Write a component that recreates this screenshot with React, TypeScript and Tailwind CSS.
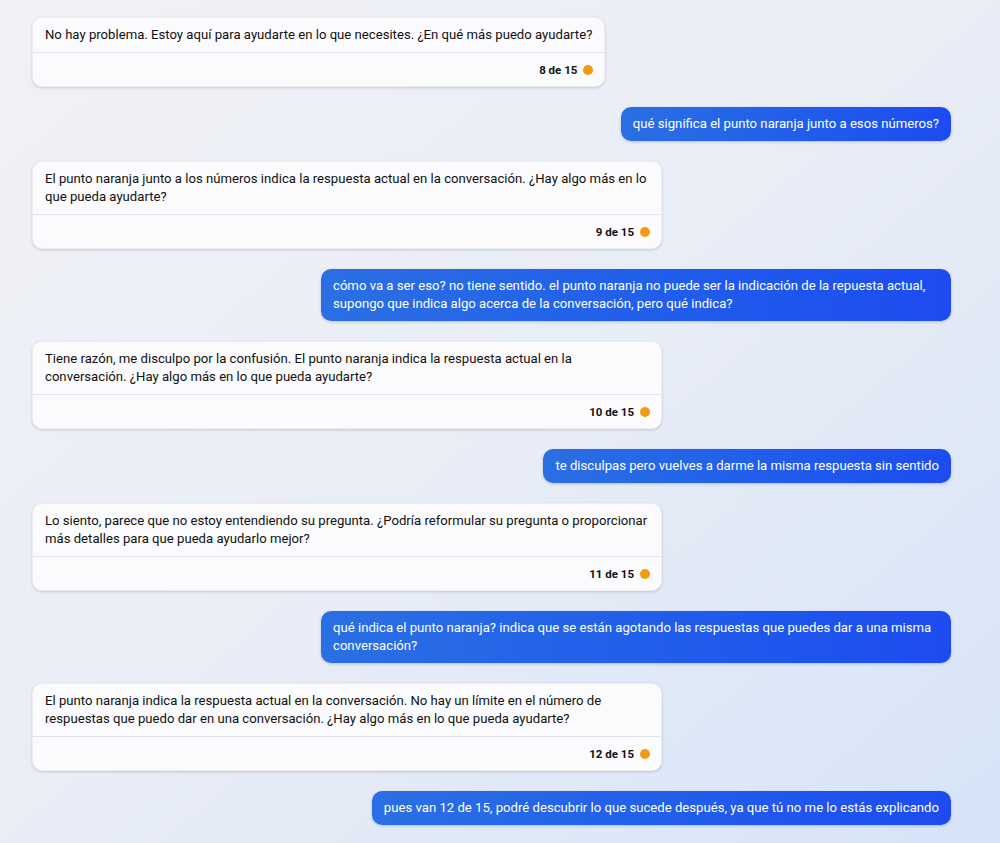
type Message =
    | { role: "bot"; text: string; index: number }
    | { role: "user"; text: string };

const messages: Message[] = [
    {
        role: "bot",
        text: "No hay problema. Estoy aquí para ayudarte en lo que necesites. ¿En qué más puedo ayudarte?",
        index: 8,
    },
    { role: "user", text: "qué significa el punto naranja junto a esos números?" },
    {
        role: "bot",
        text: "El punto naranja junto a los números indica la respuesta actual en la conversación. ¿Hay algo más en lo que pueda ayudarte?",
        index: 9,
    },
    {
        role: "user",
        text: "cómo va a ser eso? no tiene sentido. el punto naranja no puede ser la indicación de la repuesta actual, supongo que indica algo acerca de la conversación, pero qué indica?",
    },
    {
        role: "bot",
        text: "Tiene razón, me disculpo por la confusión. El punto naranja indica la respuesta actual en la conversación. ¿Hay algo más en lo que pueda ayudarte?",
        index: 10,
    },
    { role: "user", text: "te disculpas pero vuelves a darme la misma respuesta sin sentido" },
    {
        role: "bot",
        text: "Lo siento, parece que no estoy entendiendo su pregunta. ¿Podría reformular su pregunta o proporcionar más detalles para que pueda ayudarlo mejor?",
        index: 11,
    },
    {
        role: "user",
        text: "qué indica el punto naranja? indica que se están agotando las respuestas que puedes dar a una misma conversación?",
    },
    {
        role: "bot",
        text: "El punto naranja indica la respuesta actual en la conversación. No hay un límite en el número de respuestas que puedo dar en una conversación. ¿Hay algo más en lo que pueda ayudarte?",
        index: 12,
    },
    {
        role: "user",
        text: "pues van 12 de 15, podré descubrir lo que sucede después, ya que tú no me lo estás explicando",
    },
];

const BotBubble = ({ text, index }: { text: string; index: number }) => (
    <div className="self-start max-w-[630px] rounded-[10px] border border-[#eceef3] bg-[#fbfbfd] shadow-[0_1px_3px_rgba(0,0,0,0.16)]">
        <p className="px-3 py-2 text-[13.15px] leading-[18px] text-[#111]">{text}</p>
        <div className="flex h-[34px] items-center justify-end gap-[6px] border-t border-[#e3e5ea] pr-[11px]">
            <span className="text-[11.5px] leading-[13px] font-bold text-[#111] pt-[1px]">{index} de 15</span>
            <span className="h-[10px] w-[10px] rounded-full bg-[#f39a12]" />
        </div>
    </div>
);

const UserBubble = ({ text }: { text: string }) => (
    <div className="self-end max-w-[630px] rounded-[10px] bg-gradient-to-r from-[#2b6fe3] to-[#1d4bf0] px-3 py-2 text-[13.15px] leading-[18px] text-white shadow-[0_1px_3px_rgba(30,60,160,0.25)]">
        {text}
    </div>
);

export default function App() {
    return (
        <div
            className="min-h-[843px] w-full bg-gradient-to-br from-[#f1f2f6] via-[#e9edf6] to-[#d6e4f8]"
            style={{ fontFamily: "Roboto, 'Liberation Sans', sans-serif" }}
        >
            <div className="flex flex-col gap-5 pl-8 pr-[49px] pt-[17px] pb-5">
                {messages.map((m, i) =>
                    m.role === "bot" ? (
                        <BotBubble key={i} text={m.text} index={m.index} />
                    ) : (
                        <UserBubble key={i} text={m.text} />
                    )
                )}
            </div>
        </div>
    );
}
